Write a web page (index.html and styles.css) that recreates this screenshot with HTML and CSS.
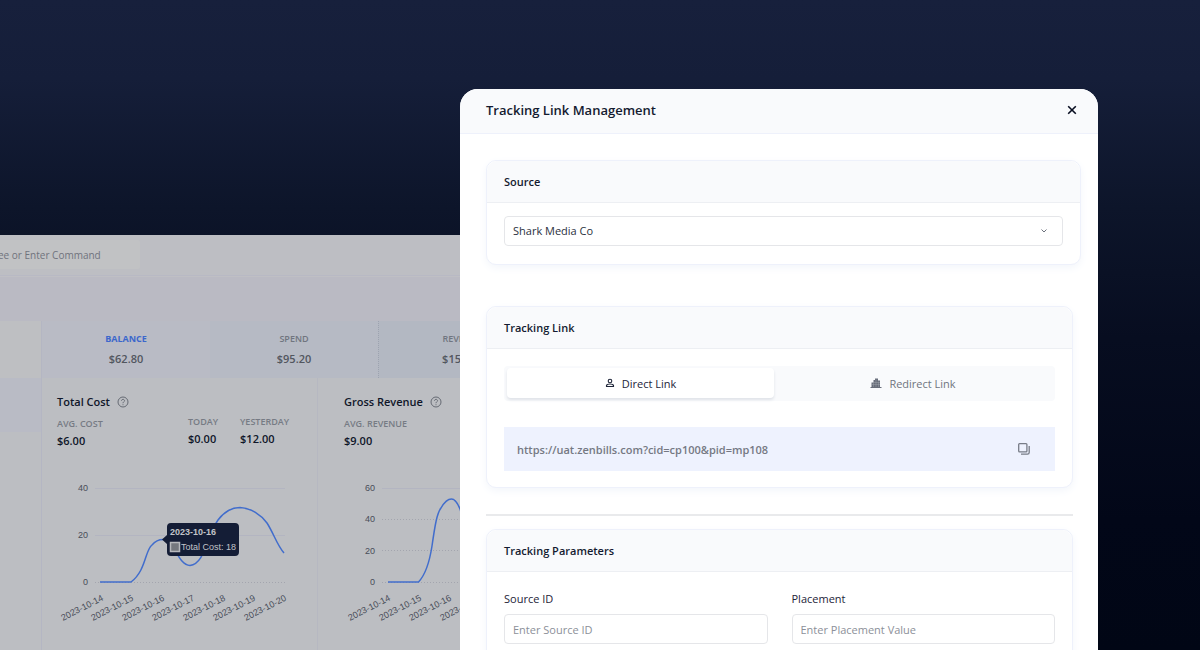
FILE: index.html
```html
<!DOCTYPE html>
<html lang="en">
<head>
<meta charset="utf-8">
<title>Tracking Link Management</title>
<link rel="stylesheet" href="styles.css">
</head>
<body>
<main class="scene">
  <section class="dashboard" aria-label="Dashboard">
    <header class="topbar">
      <input class="search" type="text" placeholder="ee or Enter Command" aria-label="Search or enter command">
    </header>
    <div class="toolbar"></div>
    <div class="board">
      <div class="rail"><div class="rail-head"></div><div class="rail-item"></div></div>
      <div class="content">
        <div class="kpis">
          <div class="kpi kpi-active"><span class="kpi-name">BALANCE</span><strong class="kpi-value">$62.80</strong></div>
          <div class="kpi"><span class="kpi-name">SPEND</span><strong class="kpi-value">$95.20</strong></div>
          <div class="kpi kpi-last"><span class="kpi-name">REVENUE</span><strong class="kpi-value">$158.00</strong></div>
        </div>
        <div class="charts">
          <article class="chart-card">
            <h2 class="chart-title">Total Cost
              <svg class="help" viewBox="0 0 12 12"><circle cx="6" cy="6" r="5"/><path d="M4.5 4.8C4.5 2.8 7.6 2.9 7.5 4.8C7.4 6 6 5.9 6 7.2M6 8.3V9.2"/></svg>
            </h2>
            <div class="stats">
              <div class="stat stat-avg"><span class="stat-name">AVG. COST</span><strong class="stat-value">$6.00</strong></div>
              <div class="stat"><span class="stat-name">TODAY</span><strong class="stat-value">$0.00</strong></div>
              <div class="stat"><span class="stat-name">YESTERDAY</span><strong class="stat-value">$12.00</strong></div>
            </div>
            <svg class="plot" viewBox="42 470 276 180">
              <path class="grid-line" d="M95 488.500H285M95 535.500H285"/><path class="grid-line grid-dots" d="M95 582.500H285"/>
              <g class="axis axis-y"><text x="88" y="491">40</text><text x="88" y="538">20</text><text x="88" y="585">0</text></g>
              <g class="axis axis-x">
                <text transform="translate(104 600) rotate(-27)">2023-10-14</text>
                <text transform="translate(134 600) rotate(-27)">2023-10-15</text>
                <text transform="translate(165 600) rotate(-27)">2023-10-16</text>
                <text transform="translate(195 600) rotate(-27)">2023-10-17</text>
                <text transform="translate(226 600) rotate(-27)">2023-10-18</text>
                <text transform="translate(256 600) rotate(-27)">2023-10-19</text>
                <text transform="translate(287 600) rotate(-27)">2023-10-20</text>
              </g>
              <path class="curve" d="M100 582H131C146 571 145 550 152 545C156 540 160 539 165 539.500C175 542 178 565 190 565.500C205 564 206 537 218 520C224 512 232 507.500 240 507.500C251 508 261 515 267 523C274 534 277 545 284 553"/>
              <path class="tip" d="M162 539.500L167 535V527Q167 523 171 523H235Q239 523 239 527V552Q239 556 235 556H171Q167 556 167 552V544Z"/>
              <rect class="swatch" x="170.500" y="542.500" width="9" height="9"/>
              <text class="tip-text tip-bold" x="170" y="535">2023-10-16</text>
              <text class="tip-text" x="181" y="550">Total Cost: 18</text>
            </svg>
          </article>
          <article class="chart-card">
            <h2 class="chart-title">Gross Revenue
              <svg class="help" viewBox="0 0 12 12"><circle cx="6" cy="6" r="5"/><path d="M4.5 4.8C4.5 2.8 7.6 2.9 7.5 4.8C7.4 6 6 5.9 6 7.2M6 8.3V9.2"/></svg>
            </h2>
            <div class="stats">
              <div class="stat stat-avg"><span class="stat-name">AVG. REVENUE</span><strong class="stat-value">$9.00</strong></div>
            </div>
            <svg class="plot" viewBox="318 470 276 180">
              <path class="grid-line" d="M382 488.500H560"/><path class="grid-line grid-dots" d="M382 519.500H560M382 550.500H560M382 582.500H560"/>
              <g class="axis axis-y"><text x="375" y="491">60</text><text x="375" y="522">40</text><text x="375" y="554">20</text><text x="375" y="585">0</text></g>
              <g class="axis axis-x">
                <text transform="translate(391 600) rotate(-27)">2023-10-14</text>
                <text transform="translate(422 600) rotate(-27)">2023-10-15</text>
                <text transform="translate(452 600) rotate(-27)">2023-10-16</text>
                <text transform="translate(483 600) rotate(-27)">2023-10-17</text>
              </g>
              <path class="curve" d="M388 582H418.500C427 573 430 559 432 546C435 525 437 513 441 508C445 501 449 499 451.500 499C455 499 458 504 460 509C467 530 470 565 480 566"/>
            </svg>
          </article>
        </div>
      </div>
    </div>
  </section>

  <section class="modal" role="dialog" aria-labelledby="modal-title">
    <header class="modal-head">
      <h1 class="modal-title" id="modal-title">Tracking Link Management</h1>
      <button class="close" type="button" aria-label="Close"><svg class="icon-close" viewBox="0 0 10 10"><path d="M1.200 1.200L8.800 8.800M8.800 1.200L1.200 8.800"/></svg></button>
    </header>
    <div class="modal-body">
      <section class="card card-source">
        <h2 class="card-title"><label for="source">Source</label></h2>
        <div class="card-body source-body">
          <div class="select-wrap">
            <select class="field" id="source"><option>Shark Media Co</option></select>
            <svg class="chevron" viewBox="0 0 8 6"><path d="M1.500 1.500L4 4L6.500 1.500"/></svg>
          </div>
        </div>
      </section>

      <section class="card card-link">
        <h2 class="card-title">Tracking Link</h2>
        <div class="card-body link-body">
          <div class="tabs" role="tablist">
            <button class="tab tab-on" type="button" role="tab" aria-selected="true">
              <svg class="icon-user" viewBox="0 0 10 10"><circle cx="5" cy="3" r="1.800"/><path d="M1.500 8.500V7.500C2 5.500 8 5.500 8.500 7.500V8.500Z"/></svg>Direct Link
            </button>
            <button class="tab" type="button" role="tab" aria-selected="false">
              <svg class="icon-city" viewBox="0 0 12 10"><path class="city-solid" d="M1.500 9V4.500H3.500V2H5V.5H8V2.500H10V9H11.500V10H.5V9Z"/><path class="city-gaps" d="M3.500 4V9M6 1.500V9M8.500 3.500V9M1.500 6.500H10M4 4.500H10"/></svg>Redirect Link
            </button>
          </div>
          <div class="url">
            <span class="url-text">https://uat.zenbills.com?cid=cp100&amp;pid=mp108</span>
            <button class="copy" type="button" aria-label="Copy link"><svg class="icon-copy" viewBox="0 0 12 12"><path d="M1.500 .7H8Q8.900 .7 8.900 1.600V8Q8.900 8.900 8 8.900H1.600Q.7 8.900 .7 8V1.600Q.7 .7 1.500 .7ZM11.200 3V9.500Q11.200 11.200 9.500 11.200H3"/></svg></button>
          </div>
        </div>
      </section>

      <hr class="rule">

      <section class="card card-params">
        <h2 class="card-title">Tracking Parameters</h2>
        <div class="card-body params-body">
          <div class="form-item"><label class="label" for="sid">Source ID</label><input class="field" id="sid" type="text" placeholder="Enter Source ID"></div>
          <div class="form-item"><label class="label" for="placement">Placement</label><input class="field" id="placement" type="text" placeholder="Enter Placement Value"></div>
        </div>
      </section>
    </div>
  </section>
</main>
</body>
</html>
```
FILE: styles.css
```css
* { box-sizing: border-box; }
body { margin: 0; font-family: "Open Sans", "Noto Sans", sans-serif; font-size: 11px; color: #141b30; }
h1, h2 { margin: 0; font-weight: 600; }
button { font: inherit; border: 0; background: none; padding: 0; color: inherit; }
svg { display: block; flex: none; fill: none; }

.scene {
  display: grid;
  grid-template-columns: 460fr 638fr 102fr;
  height: 100vh;
  overflow: hidden;
  background: linear-gradient(#17203c 0%, #151e39 12%, #0d152a 32%, #070d20 52%, #020718 80%, #010615 100%);
}

/* Dimmed dashboard */
.dashboard { margin-top: 235px; min-width: 0; overflow: hidden; background: #bcbec2; color: #0f1629; }
.topbar { height: 41px; padding-top: 5px; background: #bdbec3; border-bottom: 1px solid #b8b9c4; }
.search { display: block; width: 142px; height: 29px; margin-left: -2px; padding: 0; border: 0; border-radius: 2px; background: #c1c2c4; font: 10px/16px "Open Sans", sans-serif; }
.search::placeholder { color: #70737d; opacity: 1; }
.toolbar { height: 45px; background: #babac3; border-top: 1px solid #bfbfc4; }
.board { display: grid; grid-template-columns: 42px 1fr; }
.rail { border-right: 1px solid #b4b6c3; }
.rail-head { height: 57px; background: #bebfc2; }
.rail-item { height: 54px; background: #b9bbc5; }
.content { min-width: 0; }
.kpis { display: grid; grid-template-columns: repeat(3, 168px); }
.kpi { height: 57px; padding-top: 10px; display: flex; flex-direction: column; align-items: center; background: #b6bac4; color: #70757f; }
.kpi-active { background: #b9bbc5; }
.kpi-active .kpi-name { color: #3c67cc; font-weight: 700; }
.kpi-last { background: #b3b8c2; border-left: 1px dotted #9da3b0; }
.kpi-name { font-size: 9px; line-height: 16px; font-weight: 600; }
.kpi-value { line-height: 24px; font-weight: 600; color: #52565f; }
.charts { display: grid; grid-template-columns: repeat(2, 276px); }
.chart-card { padding-top: 15px; border-right: 1px solid #b6b8c1; }
.chart-title { display: flex; align-items: center; gap: 7px; padding-left: 15px; font-size: 11px; line-height: 18px; }
.chart-card + .chart-card .chart-title, .chart-card + .chart-card .stats { padding-left: 26px; }
.help { width: 12px; height: 12px; stroke: #656a73; }
.stats { display: flex; height: 59px; padding-left: 15px; gap: 22px; }
.stat { display: flex; flex-direction: column; padding-top: 3px; }
.stat-avg { width: 109px; padding-top: 5px; }
.stat-name { font-size: 9px; line-height: 16px; font-weight: 600; color: #767b84; }
.stat-value { font-size: 11px; line-height: 17px; font-weight: 600; }
.plot { width: 276px; height: 180px; }
.grid-line { stroke: #b3b5c1; }
.grid-dots { stroke: #a3a5ae; stroke-dasharray: 1 2; }
.axis { font: 9px "Liberation Sans", Arial, sans-serif; fill: #484d58; text-anchor: end; }
.curve { stroke: #416dcc; stroke-width: 1.500; }
.tip { fill: #141d36; }
.swatch { fill: #74777e; stroke: #b6b8bd; stroke-width: 1.500; }
.tip-text { font: 9px "Liberation Sans", Arial, sans-serif; fill: #c2c4c9; }
.tip-bold { font-weight: 700; }

/* Modal */
.modal { margin-top: 89px; min-width: 0; background: #fff; border-radius: 18px 18px 0 0; overflow: hidden; }
.modal-head { display: flex; align-items: center; justify-content: space-between; height: 45px; padding: 0 15px 2px 26px; background: #f9fafc; border-bottom: 1px solid #eef1fb; }
.modal-title { font-size: 13px; line-height: 20px; }
.close { padding: 6px; }
.icon-close { width: 10px; height: 10px; stroke: #080d20; stroke-width: 1.600; }
.modal-body { padding: 26px 17px 0 26px; }
.card { margin-right: 8px; border: 1px solid #eef1fb; border-radius: 10px; background: #fff; box-shadow: 0 3px 8px #f3f6fb; }
.card-source { margin-right: 0; margin-bottom: 41px; }
.card-title { padding: 11px 17px; border-bottom: 1px solid #edeff3; border-radius: 10px 10px 0 0; background: #f9fafc; font-size: 11px; line-height: 19px; }
.card-body { padding: 0 17px; }
.source-body { padding-top: 13px; padding-bottom: 18px; }
.select-wrap { display: grid; align-items: center; }
.select-wrap > * { grid-area: 1 / 1; }
.field { width: 100%; height: 30px; padding: 0 8px; border: 1px solid #e5e6e9; border-radius: 4px; background: #fff; color: #2a3040; font: 11px/18px "Open Sans", sans-serif; appearance: none; }
.field::placeholder { color: #8c9099; opacity: 1; }
.chevron { justify-self: end; width: 8px; height: 6px; margin-right: 15px; stroke: #6c717c; pointer-events: none; }
.link-body { padding-top: 17px; padding-bottom: 16px; }
.tabs { display: grid; grid-template-columns: 267fr 278fr; padding: 2px 3px 3px; border-radius: 4px; background: #f9fafc; }
.tab { display: flex; align-items: center; justify-content: center; gap: 7px; height: 30px; border-radius: 4px; color: #707580; font-size: 11px; }
.tab-on { background: #fff; color: #1d2438; box-shadow: 0 2px 3px #dfe2e8; }
.icon-user { width: 10px; height: 10px; stroke: #1d2438; stroke-width: 1.100; }
.icon-city { width: 12px; height: 10px; }
.city-solid { fill: #686d7a; }
.city-gaps { stroke: #a6abb4; stroke-width: .4; }
.url { display: flex; align-items: center; justify-content: space-between; height: 44px; margin-top: 26px; padding: 0 25px 0 13px; background: #eef2fe; }
.url-text { font-weight: 600; color: #757983; }
.icon-copy { width: 12px; height: 12px; stroke: #777c87; stroke-width: 1.300; }
.rule { height: 2px; margin: 26px 8px 13px 0; border: 0; background: #e9eaec; }
.params-body { display: grid; grid-template-columns: 1fr 1fr; gap: 24px; padding-top: 18px; padding-bottom: 24px; }
.label { display: block; margin-bottom: 6px; line-height: 18px; color: #1d2438; }
```
